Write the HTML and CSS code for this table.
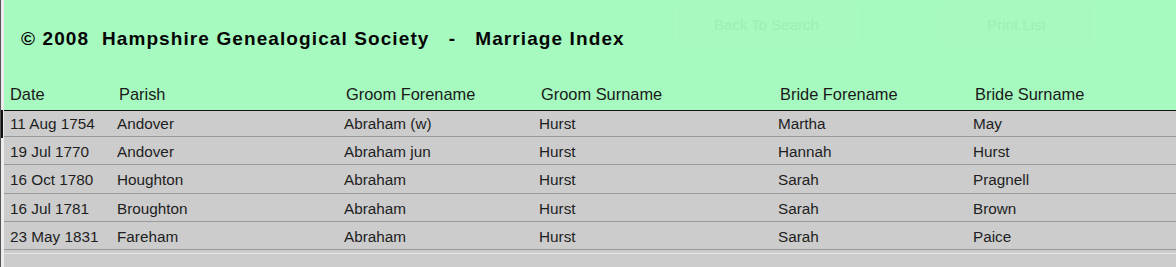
FILE: index.html
```html
<!DOCTYPE html>
<html>
<head>
<meta charset="utf-8">
<title>Marriage Index</title>
<link rel="stylesheet" href="styles.css">
</head>
<body>
<div class="frame">
  <div class="marker"></div>
  <div class="page">
    <div class="top">
      <h1 class="title">©&nbsp;2008&nbsp;&nbsp;Hampshire Genealogical Society&nbsp;&nbsp;&nbsp;-&nbsp;&nbsp;&nbsp;Marriage Index</h1>
      <div class="actions">
        <button class="btn btn-back">Back To Search</button>
        <button class="btn btn-print">Print List</button>
      </div>
    </div>
    <div class="row head">
      <div class="cell">Date</div>
      <div class="cell">Parish</div>
      <div class="cell">Groom Forename</div>
      <div class="cell">Groom Surname</div>
      <div class="cell">Bride Forename</div>
      <div class="cell">Bride Surname</div>
    </div>
    <div class="rows">
      <div class="row data first">
        <div class="cell">11 Aug 1754</div><div class="cell">Andover</div><div class="cell">Abraham (w)</div><div class="cell">Hurst</div><div class="cell">Martha</div><div class="cell">May</div>
      </div>
      <div class="row data">
        <div class="cell">19 Jul 1770</div><div class="cell">Andover</div><div class="cell">Abraham jun</div><div class="cell">Hurst</div><div class="cell">Hannah</div><div class="cell">Hurst</div>
      </div>
      <div class="row data tall">
        <div class="cell">16 Oct 1780</div><div class="cell">Houghton</div><div class="cell">Abraham</div><div class="cell">Hurst</div><div class="cell">Sarah</div><div class="cell">Pragnell</div>
      </div>
      <div class="row data">
        <div class="cell">16 Jul 1781</div><div class="cell">Broughton</div><div class="cell">Abraham</div><div class="cell">Hurst</div><div class="cell">Sarah</div><div class="cell">Brown</div>
      </div>
      <div class="row data">
        <div class="cell">23 May 1831</div><div class="cell">Fareham</div><div class="cell">Abraham</div><div class="cell">Hurst</div><div class="cell">Sarah</div><div class="cell">Paice</div>
      </div>
      <div class="foot"></div>
    </div>
  </div>
</div>
</body>
</html>
```
FILE: styles.css
```css
html, body {
  margin: 0;
  padding: 0;
  height: 100%;
  background: #cccccc;
}
body {
  font-family: "Liberation Sans", Arial, sans-serif;
  overflow: hidden;
}
.frame {
  position: relative;
  display: flex;
  min-height: 267px;
  border-left: 1px solid #555555;
  background: #ececec;
}
.marker {
  position: absolute;
  left: 0;
  top: 110px;
  width: 2px;
  height: 28px;
  background: #111111;
}
.page {
  flex: 1;
  margin-left: 3px;
  background: #cccccc;
  display: flex;
  flex-direction: column;
}
.top {
  height: 70px;
  background: #a6f9bf;
  display: flex;
  align-items: flex-start;
}
.title {
  margin: 0;
  padding: 28px 0 0 17px;
  font-size: 19px;
  letter-spacing: 1.1px;
  line-height: 22px;
  font-weight: bold;
  color: #050505;
  white-space: nowrap;
}
.actions {
  display: flex;
  gap: 80px;
  margin-left: auto;
  margin-right: 81px;
  padding-top: 5px;
}
.btn {
  height: 38px;
  background: #a7f9bf;
  border: 1px solid #aefac6;
  color: #9eeeb6;
  font-family: "Liberation Sans", Arial, sans-serif;
  font-size: 15px;
  padding: 0;
}
.btn-back { width: 183px; }
.btn-print { width: 157px; }
.row {
  display: grid;
  grid-template-columns: 107px 227px 195px 239px 195px 1fr;
}
.cell {
  padding-left: 6px;
  white-space: nowrap;
}
.head {
  height: 40px;
  background: #a6f9bf;
  border-bottom: 1px solid #111111;
  align-items: end;
  font-size: 16.4px;
  color: #1a1a1a;
}
.head .cell {
  padding-bottom: 6px;
  padding-left: 8px;
}
.head .cell:first-child {
  padding-left: 6px;
}
.data {
  height: 28px;
  box-sizing: border-box;
  border-bottom: 1px solid #9a9a9a;
  align-items: center;
  font-size: 15.3px;
  color: #1e1e1e;
}
.data .cell {
  padding-top: 2px;
}
.data.first {
  height: 26px;
}
.data.first .cell {
  padding-top: 0;
}
.data.tall {
  height: 29px;
}
.foot {
  margin-top: 3px;
  border-top: 1px solid #e6e6e6;
  flex: 1;
}
```
